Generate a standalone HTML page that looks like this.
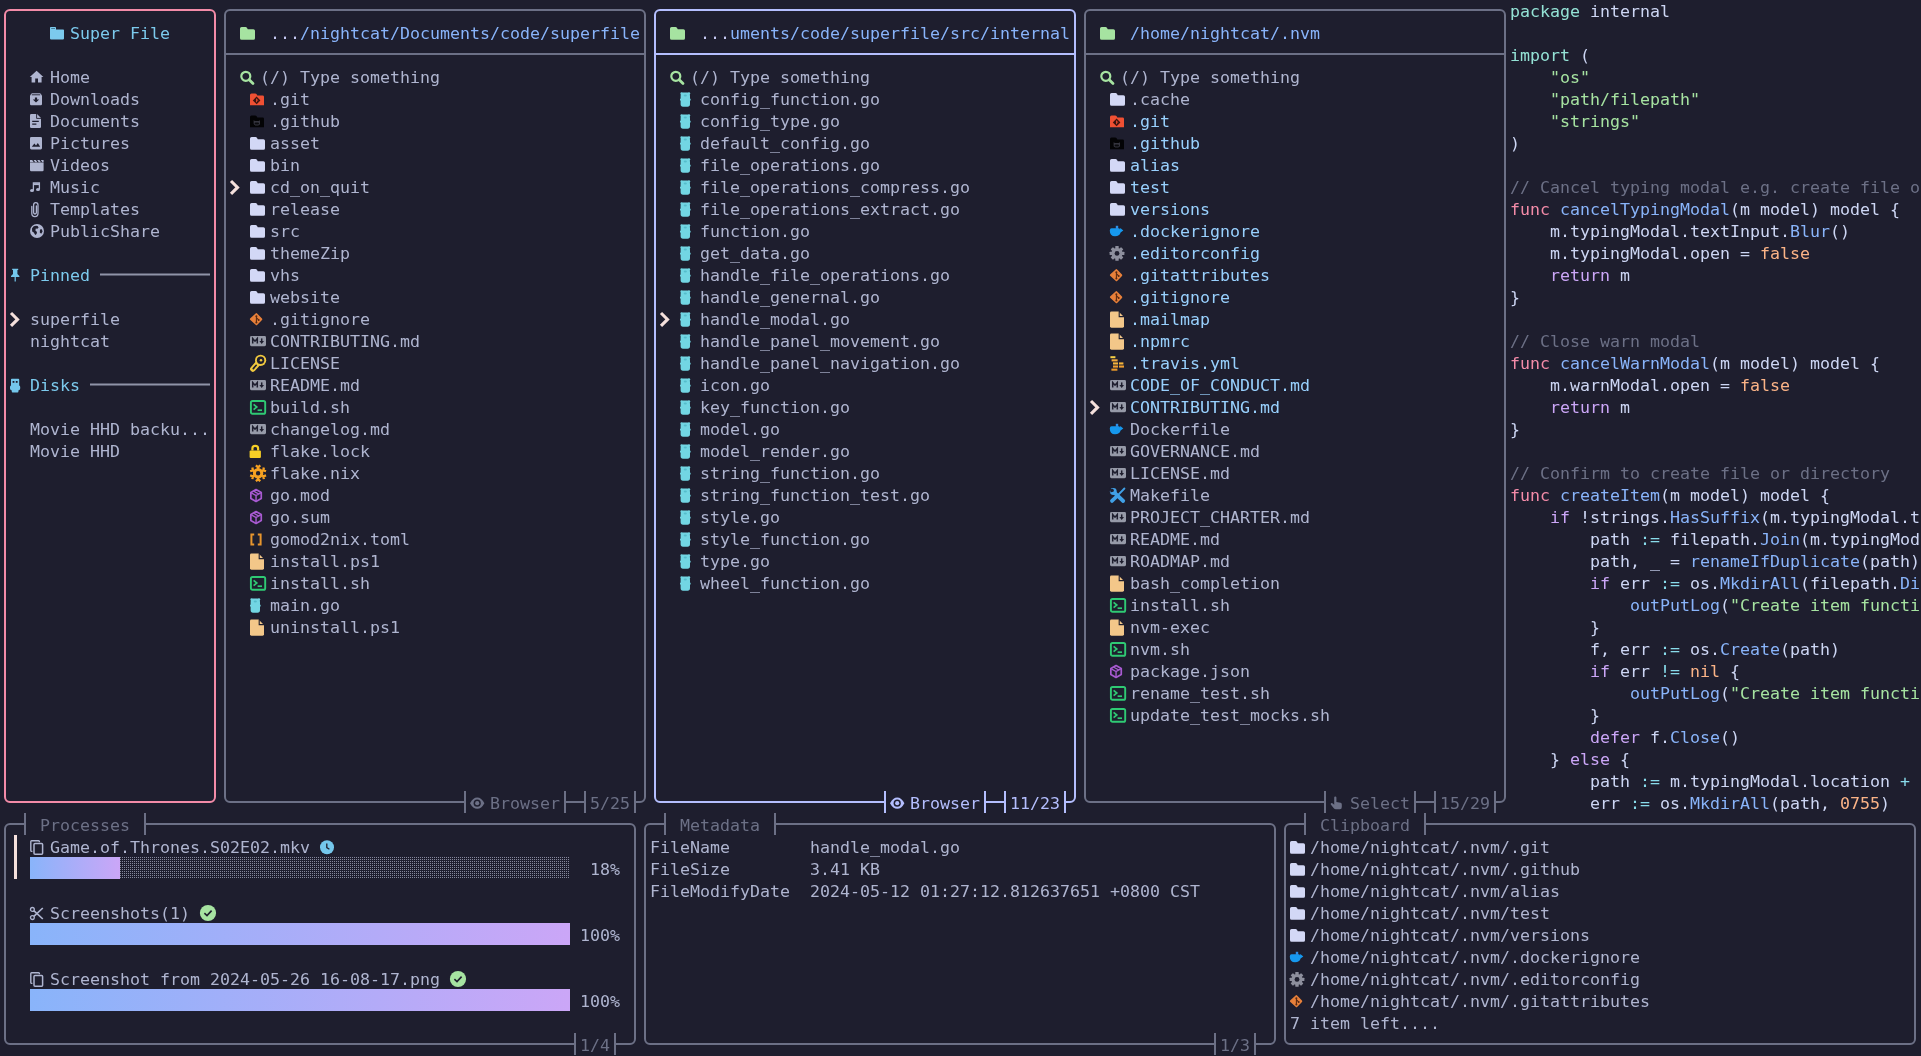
<!DOCTYPE html>
<html lang="en"><head><meta charset="utf-8"><title>superfile</title>
<style>
html,body{margin:0;padding:0}
body{width:1921px;height:1056px;background:#1e1e2e;overflow:hidden;position:relative;color:#afb5d0;
font-family:"DejaVu Sans Mono","Liberation Mono",monospace;font-size:16.61px;line-height:22px}
.t{position:absolute;white-space:pre;height:22px}
#s{position:absolute;left:0;top:0;width:1921px;height:1056px;will-change:transform}
.sky{color:#7ccaed}
.sel{color:#98d0fd}
.i{position:absolute;overflow:visible}
#b{position:absolute;left:0;top:0}
#b path{fill:none;stroke-width:2}
.bar{position:absolute;height:22px;background:linear-gradient(90deg,#89b4fa,#cba6f7)}
.dots{position:absolute;height:22px;background-size:2px 2px;background-image:linear-gradient(to bottom,transparent 1px,#1e1e2e 1px),linear-gradient(to right,#85879c 1px,transparent 1px)}
</style></head>
<body>
<svg id="b" width="1921" height="1056" viewBox="0 0 1921 1056">
<path d="M10,10 A5,5 0 0 0 5,15 V797 A5,5 0 0 0 10,802 M210,10 A5,5 0 0 1 215,15 V797 A5,5 0 0 1 210,802 M10,10 H210 M10,802 H210" stroke="#f38ba8"/>
<path d="M100,274.5 H210" stroke="#9094a8"/>
<path d="M90,384.5 H210" stroke="#9094a8"/>
<path d="M230,10 A5,5 0 0 0 225,15 V797 A5,5 0 0 0 230,802 M640,10 A5,5 0 0 1 645,15 V797 A5,5 0 0 1 640,802 M230,10 H640 M230,802 H465 M565,802 H585 M635,802 H640 M225,54 H645" stroke="#6c7086"/>
<path d="M465,791 V813 M565,791 V813 M585,791 V813 M635,791 V813" stroke="#6c7086"/>
<path d="M660,10 A5,5 0 0 0 655,15 V797 A5,5 0 0 0 660,802 M1070,10 A5,5 0 0 1 1075,15 V797 A5,5 0 0 1 1070,802 M660,10 H1070 M660,802 H885 M985,802 H1005 M1065,802 H1070 M655,54 H1075" stroke="#b4befe"/>
<path d="M885,791 V813 M985,791 V813 M1005,791 V813 M1065,791 V813" stroke="#b4befe"/>
<path d="M1090,10 A5,5 0 0 0 1085,15 V797 A5,5 0 0 0 1090,802 M1500,10 A5,5 0 0 1 1505,15 V797 A5,5 0 0 1 1500,802 M1090,10 H1500 M1090,802 H1325 M1415,802 H1435 M1495,802 H1500 M1085,54 H1505" stroke="#6c7086"/>
<path d="M1325,791 V813 M1415,791 V813 M1435,791 V813 M1495,791 V813" stroke="#6c7086"/>
<path d="M10,824 A5,5 0 0 0 5,829 V1039 A5,5 0 0 0 10,1044 M630,824 A5,5 0 0 1 635,829 V1039 A5,5 0 0 1 630,1044 M10,824 H25 M145,824 H630 M10,1044 H575 M615,1044 H630" stroke="#6c7086"/>
<path d="M25,813 V835 M145,813 V835" stroke="#6c7086"/>
<path d="M575,1033 V1055 M615,1033 V1055" stroke="#6c7086"/>
<path d="M650,824 A5,5 0 0 0 645,829 V1039 A5,5 0 0 0 650,1044 M1270,824 A5,5 0 0 1 1275,829 V1039 A5,5 0 0 1 1270,1044 M650,824 H665 M775,824 H1270 M650,1044 H1215 M1255,1044 H1270" stroke="#6c7086"/>
<path d="M665,813 V835 M775,813 V835" stroke="#6c7086"/>
<path d="M1215,1033 V1055 M1255,1033 V1055" stroke="#6c7086"/>
<path d="M1290,824 A5,5 0 0 0 1285,829 V1039 A5,5 0 0 0 1290,1044 M1910,824 A5,5 0 0 1 1915,829 V1039 A5,5 0 0 1 1910,1044 M1290,824 H1305 M1425,824 H1910 M1290,1044 H1910" stroke="#6c7086"/>
<path d="M1305,813 V835 M1425,813 V835" stroke="#6c7086"/>
</svg>
<div id="s">
<svg class="i" style="left:50px;top:22px" width="22" height="22" viewBox="0 0 22 22"><path d="M0.8,5 H5.2 Q6,5 6,5.8 V7.4 H13.2 Q14,7.4 14,8.2 V16.6 Q14,17.4 13.2,17.4 H0.8 Q0,17.4 0,16.6 V5.8 Q0,5 0.8,5 Z" fill="#7ccaed"/><path d="M1.2,6.5 H5" stroke="#3f7590" stroke-width="0.9"/></svg>
<div class="t sky" style="left:70px;top:23px">Super File</div>
<svg class="i" style="left:30px;top:66px" width="22" height="22" viewBox="0 0 22 22"><path d="M6.6,4.8 L13.4,11 H11.6 V16.4 H8 V12.6 H5.2 V16.4 H1.6 V11 H-0.2 Z" fill="#afb5d0"/></svg>
<div class="t" style="left:50px;top:67px">Home</div>
<svg class="i" style="left:30px;top:88px" width="22" height="22" viewBox="0 0 22 22"><path d="M1.8,5.2 H10.2 L12,7.6 V16 Q12,17.2 10.8,17.2 H1.2 Q0,17.2 0,16 V7.6 Z" fill="#afb5d0"/><path d="M1.8,6.8 H10.2" stroke="#1e1e2e" stroke-width="0.9"/><path d="M4.9,9.4 H7.1 V11.4 H9.2 L6,14.6 L2.8,11.4 H4.9 Z" fill="#1e1e2e"/></svg>
<div class="t" style="left:50px;top:89px">Downloads</div>
<svg class="i" style="left:30px;top:110px" width="22" height="22" viewBox="0 0 22 22"><path d="M1.2,4 H7 L11,8 V16.8 Q11,18 9.8,18 H1.2 Q0,18 0,16.8 V5.2 Q0,4 1.2,4 Z" fill="#afb5d0"/><path d="M6.6,4 V8.4 H11" fill="none" stroke="#1e1e2e" stroke-width="0.9"/><path d="M2.2,11.4 H8.8 M2.2,14.2 H6.4" stroke="#1e1e2e" stroke-width="1.3"/></svg>
<div class="t" style="left:50px;top:111px">Documents</div>
<svg class="i" style="left:30px;top:132px" width="22" height="22" viewBox="0 0 22 22"><rect x="0" y="5" width="12" height="12.4" rx="1.3" fill="#afb5d0"/><path d="M1.8,14.8 L4.4,11.4 L6,13.4 L7.8,11 L10.2,14.8 Z" fill="#1e1e2e"/></svg>
<div class="t" style="left:50px;top:133px">Pictures</div>
<svg class="i" style="left:30px;top:154px" width="22" height="22" viewBox="0 0 22 22"><path d="M0,8.6 H13.6 V16 Q13.6,17.2 12.4,17.2 H1.2 Q0,17.2 0,16 Z" fill="#afb5d0"/><path d="M0,6 H2.2 L3.8,8.2 H0 Z M3.6,6 H5.8 L7.4,8.2 H5.2 Z M7.2,6 H9.4 L11,8.2 H8.8 Z M10.8,6 H13.6 V8.2 H12.4 Z" fill="#afb5d0"/></svg>
<div class="t" style="left:50px;top:155px">Videos</div>
<svg class="i" style="left:30px;top:176px" width="22" height="22" viewBox="0 0 22 22"><path d="M3.4,14.4 V7 H9.4 V13.2" fill="none" stroke="#afb5d0" stroke-width="1.3"/><path d="M3.4,8.2 H9.4" stroke="#afb5d0" stroke-width="1.8"/><ellipse cx="2" cy="14.6" rx="2" ry="1.5" fill="#afb5d0"/><ellipse cx="8" cy="13.6" rx="2" ry="1.5" fill="#afb5d0"/></svg>
<div class="t" style="left:50px;top:177px">Music</div>
<svg class="i" style="left:30px;top:198px" width="22" height="22" viewBox="0 0 22 22"><path d="M6.4,8 V14.6 Q6.4,16 5,16 Q3.6,16 3.6,14.6 V7 Q3.6,4.6 5.8,4.6 Q8,4.6 8,7 V15.2 Q8,18.6 4.9,18.6 Q1.8,18.6 1.8,15.2 V8.4" fill="none" stroke="#afb5d0" stroke-width="1.3" stroke-linecap="round"/></svg>
<div class="t" style="left:50px;top:199px">Templates</div>
<svg class="i" style="left:30px;top:220px" width="22" height="22" viewBox="0 0 22 22"><circle cx="7" cy="11" r="7" fill="#afb5d0"/><path d="M3.4,6.4 Q5.6,5.4 7.6,6 L8.6,7.4 L7.4,8.8 L5.8,8.6 L5.4,10.6 L7,12 L6.6,14 L5.2,15 L3.8,12.6 L2.2,11.4 L2,8.6 Z M10,9.6 L11.8,9.2 L12.6,11.4 L11.2,13.8 L9.8,12.6 Z" fill="#1e1e2e"/></svg>
<div class="t" style="left:50px;top:221px">PublicShare</div>
<svg class="i" style="left:10px;top:264px" width="22" height="22" viewBox="0 0 22 22"><path d="M2.2,4.8 H8.2 V6 H7.4 V10 L9.4,12 V13 H5.8 V17.6 H4.6 V13 H1 V12 L3,10 V6 H2.2 Z" fill="#74c7ec"/></svg>
<div class="t sky" style="left:30px;top:265px">Pinned</div>
<svg class="i" style="left:10px;top:308px" width="22" height="22" viewBox="0 0 22 22"><path d="M1,5 L7.5,11.4 L1,17.8" fill="none" stroke="#f5e0dc" stroke-width="3.1" stroke-linejoin="miter"/></svg>
<div class="t" style="left:30px;top:309px">superfile</div>
<div class="t" style="left:30px;top:331px">nightcat</div>
<svg class="i" style="left:10px;top:374px" width="22" height="22" viewBox="0 0 22 22"><path d="M1,5.6 Q1,4.8 1.8,4.8 H8.4 Q9.2,4.8 9.2,5.6 V11.4 Q10.2,11.8 10.2,13 V14.4 Q10.2,16 8.4,16.6 V17.8 Q8.4,18.6 7.6,18.6 H2.6 Q1.8,18.6 1.8,17.8 V16.6 Q0,16 0,14.4 V13 Q0,11.8 1,11.4 Z" fill="#74c7ec"/><rect x="2.6" y="7" width="1.8" height="1.8" fill="#1e1e2e"/><rect x="5.8" y="7" width="1.8" height="1.8" fill="#1e1e2e"/></svg>
<div class="t sky" style="left:30px;top:375px">Disks</div>
<div class="t" style="left:30px;top:419px">Movie HHD backu...</div>
<div class="t" style="left:30px;top:441px">Movie HHD</div>
<svg class="i" style="left:240px;top:22px" width="22" height="22" viewBox="0 0 22 22"><path d="M1.6,5 H5.6 Q6.4,5 6.9,5.7 L7.8,7.2 H13.4 Q15,7.2 15,8.8 V16.2 Q15,17.8 13.4,17.8 H1.6 Q0,17.8 0,16.2 V6.6 Q0,5 1.6,5 Z" fill="#a6e3a1"/></svg>
<div class="t" style="left:270px;top:23px"><span style="color:#c6c9f3">...</span><span style="color:#89b4fa">/nightcat/Documents/code/superfile</span></div>
<svg class="i" style="left:240px;top:66px" width="22" height="22" viewBox="0 0 22 22"><circle cx="5.8" cy="10.3" r="4.5" fill="none" stroke="#a6e3a1" stroke-width="2.2"/><path d="M9.2,13.8 L13,17.6" stroke="#a6e3a1" stroke-width="2.8" stroke-linecap="round"/></svg>
<div class="t" style="left:260px;top:67px">(/) Type something</div>
<svg class="i" style="left:250px;top:88px" width="22" height="22" viewBox="0 0 22 22"><path d="M1.5,5.4 H5.2 Q6,5.4 6.5,6.1 L7.3,7.4 H12.6 Q14,7.4 14,8.8 V17.3 H0 V6.9 Q0,5.4 1.5,5.4 Z" fill="#f05033"/><path d="M6.6,8.6 L10.4,12.4 L6.6,16.2 L2.8,12.4 Z" fill="#3b1410"/><path d="M6.6,10.6 V14.2 M6.6,11.4 L8.2,12.6" stroke="#f05033" stroke-width="0.9" fill="none"/></svg>
<div class="t" style="left:270px;top:89px">.git</div>
<svg class="i" style="left:250px;top:110px" width="22" height="22" viewBox="0 0 22 22"><path d="M1.5,5.4 H5.2 Q6,5.4 6.5,6.1 L7.3,7.4 H12.6 Q14,7.4 14,8.8 V17.3 H0 V6.9 Q0,5.4 1.5,5.4 Z" fill="#030305"/><path d="M3.6,10.2 L5,11 H8.6 L10,10.2 V13.6 Q10,15.6 6.8,15.6 Q3.6,15.6 3.6,13.6 Z" fill="#34343e"/><rect x="4.6" y="12.4" width="4.4" height="2.2" rx="1.1" fill="#0a0a0e"/></svg>
<div class="t" style="left:270px;top:111px">.github</div>
<svg class="i" style="left:250px;top:132px" width="22" height="22" viewBox="0 0 22 22"><path d="M1.6,5 H5.6 Q6.4,5 6.9,5.7 L7.8,7.2 H13.4 Q15,7.2 15,8.8 V16.2 Q15,17.8 13.4,17.8 H1.6 Q0,17.8 0,16.2 V6.6 Q0,5 1.6,5 Z" fill="#d3d8f6"/></svg>
<div class="t" style="left:270px;top:133px">asset</div>
<svg class="i" style="left:250px;top:154px" width="22" height="22" viewBox="0 0 22 22"><path d="M1.6,5 H5.6 Q6.4,5 6.9,5.7 L7.8,7.2 H13.4 Q15,7.2 15,8.8 V16.2 Q15,17.8 13.4,17.8 H1.6 Q0,17.8 0,16.2 V6.6 Q0,5 1.6,5 Z" fill="#d3d8f6"/></svg>
<div class="t" style="left:270px;top:155px">bin</div>
<svg class="i" style="left:230px;top:176px" width="22" height="22" viewBox="0 0 22 22"><path d="M1,5 L7.5,11.4 L1,17.8" fill="none" stroke="#f5e0dc" stroke-width="3.1" stroke-linejoin="miter"/></svg>
<svg class="i" style="left:250px;top:176px" width="22" height="22" viewBox="0 0 22 22"><path d="M1.6,5 H5.6 Q6.4,5 6.9,5.7 L7.8,7.2 H13.4 Q15,7.2 15,8.8 V16.2 Q15,17.8 13.4,17.8 H1.6 Q0,17.8 0,16.2 V6.6 Q0,5 1.6,5 Z" fill="#d3d8f6"/></svg>
<div class="t" style="left:270px;top:177px">cd_on_quit</div>
<svg class="i" style="left:250px;top:198px" width="22" height="22" viewBox="0 0 22 22"><path d="M1.6,5 H5.6 Q6.4,5 6.9,5.7 L7.8,7.2 H13.4 Q15,7.2 15,8.8 V16.2 Q15,17.8 13.4,17.8 H1.6 Q0,17.8 0,16.2 V6.6 Q0,5 1.6,5 Z" fill="#d3d8f6"/></svg>
<div class="t" style="left:270px;top:199px">release</div>
<svg class="i" style="left:250px;top:220px" width="22" height="22" viewBox="0 0 22 22"><path d="M1.6,5 H5.6 Q6.4,5 6.9,5.7 L7.8,7.2 H13.4 Q15,7.2 15,8.8 V16.2 Q15,17.8 13.4,17.8 H1.6 Q0,17.8 0,16.2 V6.6 Q0,5 1.6,5 Z" fill="#d3d8f6"/></svg>
<div class="t" style="left:270px;top:221px">src</div>
<svg class="i" style="left:250px;top:242px" width="22" height="22" viewBox="0 0 22 22"><path d="M1.6,5 H5.6 Q6.4,5 6.9,5.7 L7.8,7.2 H13.4 Q15,7.2 15,8.8 V16.2 Q15,17.8 13.4,17.8 H1.6 Q0,17.8 0,16.2 V6.6 Q0,5 1.6,5 Z" fill="#d3d8f6"/></svg>
<div class="t" style="left:270px;top:243px">themeZip</div>
<svg class="i" style="left:250px;top:264px" width="22" height="22" viewBox="0 0 22 22"><path d="M1.6,5 H5.6 Q6.4,5 6.9,5.7 L7.8,7.2 H13.4 Q15,7.2 15,8.8 V16.2 Q15,17.8 13.4,17.8 H1.6 Q0,17.8 0,16.2 V6.6 Q0,5 1.6,5 Z" fill="#d3d8f6"/></svg>
<div class="t" style="left:270px;top:265px">vhs</div>
<svg class="i" style="left:250px;top:286px" width="22" height="22" viewBox="0 0 22 22"><path d="M1.6,5 H5.6 Q6.4,5 6.9,5.7 L7.8,7.2 H13.4 Q15,7.2 15,8.8 V16.2 Q15,17.8 13.4,17.8 H1.6 Q0,17.8 0,16.2 V6.6 Q0,5 1.6,5 Z" fill="#d3d8f6"/></svg>
<div class="t" style="left:270px;top:287px">website</div>
<svg class="i" style="left:250px;top:308px" width="22" height="22" viewBox="0 0 22 22"><path d="M5.9,5.2 Q6.5,4.9 7.1,5.5 L12,10.4 Q12.6,11.2 12,12 L7.1,16.9 Q6.5,17.5 5.9,16.9 L0.1,11.8 Q-0.4,11.2 0.1,10.6 Z" fill="#e8803a"/><path d="M6.4,8 V14.8 M6.4,9.6 L8.6,11.8" stroke="#5a2a12" stroke-width="1.1" fill="none"/><circle cx="6.4" cy="8.2" r="1" fill="#5a2a12"/><circle cx="6.4" cy="14.6" r="1" fill="#5a2a12"/><circle cx="8.7" cy="11.9" r="1" fill="#5a2a12"/></svg>
<div class="t" style="left:270px;top:309px">.gitignore</div>
<svg class="i" style="left:250px;top:330px" width="22" height="22" viewBox="0 0 22 22"><rect x="0" y="6" width="16" height="10.2" rx="1.4" fill="#969aa8"/><path d="M2.7,13.6 V8.6 L5,11.2 L7.3,8.6 V13.6" stroke="#1e1e2e" stroke-width="1.5" fill="none" stroke-linejoin="miter"/><path d="M11.7,8.4 V12" stroke="#1e1e2e" stroke-width="1.5"/><path d="M9.4,11 H14 L11.7,13.9 Z" fill="#1e1e2e"/></svg>
<div class="t" style="left:270px;top:331px">CONTRIBUTING.md</div>
<svg class="i" style="left:250px;top:352px" width="22" height="22" viewBox="0 0 22 22"><path d="M10.6,8.3 L2.9,17" stroke="#f1c93f" stroke-width="5.6" stroke-linecap="round"/><circle cx="10.6" cy="8.3" r="5.6" fill="#f1c93f"/><circle cx="10.6" cy="8.3" r="3.7" fill="#1e1e2e"/><path d="M6.2,13.3 L3.3,16.6" stroke="#1e1e2e" stroke-width="1.7" stroke-linecap="round"/><circle cx="11" cy="8.2" r="1.25" fill="#f1c93f"/></svg>
<div class="t" style="left:270px;top:353px">LICENSE</div>
<svg class="i" style="left:250px;top:374px" width="22" height="22" viewBox="0 0 22 22"><rect x="0" y="6" width="16" height="10.2" rx="1.4" fill="#969aa8"/><path d="M2.7,13.6 V8.6 L5,11.2 L7.3,8.6 V13.6" stroke="#1e1e2e" stroke-width="1.5" fill="none" stroke-linejoin="miter"/><path d="M11.7,8.4 V12" stroke="#1e1e2e" stroke-width="1.5"/><path d="M9.4,11 H14 L11.7,13.9 Z" fill="#1e1e2e"/></svg>
<div class="t" style="left:270px;top:375px">README.md</div>
<svg class="i" style="left:250px;top:396px" width="22" height="22" viewBox="0 0 22 22"><rect x="0.9" y="5" width="14.3" height="12.8" rx="1.6" fill="none" stroke="#2fca74" stroke-width="1.9"/><path d="M3.6,8.3 L6.8,11 L3.6,13.7" fill="none" stroke="#2fca74" stroke-width="1.7"/><path d="M7.6,14.2 H12" stroke="#2fca74" stroke-width="1.7"/></svg>
<div class="t" style="left:270px;top:397px">build.sh</div>
<svg class="i" style="left:250px;top:418px" width="22" height="22" viewBox="0 0 22 22"><rect x="0" y="6" width="16" height="10.2" rx="1.4" fill="#969aa8"/><path d="M2.7,13.6 V8.6 L5,11.2 L7.3,8.6 V13.6" stroke="#1e1e2e" stroke-width="1.5" fill="none" stroke-linejoin="miter"/><path d="M11.7,8.4 V12" stroke="#1e1e2e" stroke-width="1.5"/><path d="M9.4,11 H14 L11.7,13.9 Z" fill="#1e1e2e"/></svg>
<div class="t" style="left:270px;top:419px">changelog.md</div>
<svg class="i" style="left:250px;top:440px" width="22" height="22" viewBox="0 0 22 22"><rect x="-0.4" y="10.4" width="11.3" height="7.7" rx="1" fill="#f6cf26"/><path d="M2.4,10.6 V8.4 Q2.4,5.9 5.25,5.9 Q8.1,5.9 8.1,8.4 V10.6" fill="none" stroke="#f6cf26" stroke-width="2.2"/></svg>
<div class="t" style="left:270px;top:441px">flake.lock</div>
<svg class="i" style="left:250px;top:462px" width="22" height="22" viewBox="0 0 22 22"><g transform="translate(8.1,11.3)"><g transform="rotate(0)"><path d="M0,-3.6 V-7.6 M0,-6 L-2.2,-7.9 M0,-6 L2.2,-7.9" stroke="#f5a122" stroke-width="2.3" fill="none"/></g><g transform="rotate(60)"><path d="M0,-3.6 V-7.6 M0,-6 L-2.2,-7.9 M0,-6 L2.2,-7.9" stroke="#f5a122" stroke-width="2.3" fill="none"/></g><g transform="rotate(120)"><path d="M0,-3.6 V-7.6 M0,-6 L-2.2,-7.9 M0,-6 L2.2,-7.9" stroke="#f5a122" stroke-width="2.3" fill="none"/></g><g transform="rotate(180)"><path d="M0,-3.6 V-7.6 M0,-6 L-2.2,-7.9 M0,-6 L2.2,-7.9" stroke="#f5a122" stroke-width="2.3" fill="none"/></g><g transform="rotate(240)"><path d="M0,-3.6 V-7.6 M0,-6 L-2.2,-7.9 M0,-6 L2.2,-7.9" stroke="#f5a122" stroke-width="2.3" fill="none"/></g><g transform="rotate(300)"><path d="M0,-3.6 V-7.6 M0,-6 L-2.2,-7.9 M0,-6 L2.2,-7.9" stroke="#f5a122" stroke-width="2.3" fill="none"/></g><circle r="3.7" fill="none" stroke="#f5a122" stroke-width="3"/></g></svg>
<div class="t" style="left:270px;top:463px">flake.nix</div>
<svg class="i" style="left:250px;top:484px" width="22" height="22" viewBox="0 0 22 22"><path d="M6.05,5.5 L11.25,8.5 V14.5 L6.05,17.5 L0.85,14.5 V8.5 Z" fill="none" stroke="#a85ad2" stroke-width="1.7" stroke-linejoin="round"/><path d="M0.9,8.6 L6.05,11.5 L11.2,8.6 M6.05,11.5 V17.4 M3.4,7 L8.7,10" fill="none" stroke="#a85ad2" stroke-width="1.4"/></svg>
<div class="t" style="left:270px;top:485px">go.mod</div>
<svg class="i" style="left:250px;top:506px" width="22" height="22" viewBox="0 0 22 22"><path d="M6.05,5.5 L11.25,8.5 V14.5 L6.05,17.5 L0.85,14.5 V8.5 Z" fill="none" stroke="#a85ad2" stroke-width="1.7" stroke-linejoin="round"/><path d="M0.9,8.6 L6.05,11.5 L11.2,8.6 M6.05,11.5 V17.4 M3.4,7 L8.7,10" fill="none" stroke="#a85ad2" stroke-width="1.4"/></svg>
<div class="t" style="left:270px;top:507px">go.sum</div>
<svg class="i" style="left:250px;top:528px" width="22" height="22" viewBox="0 0 22 22"><path d="M4.2,6.6 H1.4 V16.6 H4.2 M7.8,6.6 H10.6 V16.6 H7.8" fill="none" stroke="#e8962e" stroke-width="2"/></svg>
<div class="t" style="left:270px;top:529px">gomod2nix.toml</div>
<svg class="i" style="left:250px;top:550px" width="22" height="22" viewBox="0 0 22 22"><path d="M1.4,3.6 H8.6 L14,9 V18.3 Q14,19.7 12.6,19.7 H1.4 Q0,19.7 0,18.3 V5 Q0,3.6 1.4,3.6 Z" fill="#f3c789"/><path d="M9.2,3.6 V8.6 H14" fill="none" stroke="#1e1e2e" stroke-width="1.1"/></svg>
<div class="t" style="left:270px;top:551px">install.ps1</div>
<svg class="i" style="left:250px;top:572px" width="22" height="22" viewBox="0 0 22 22"><rect x="0.9" y="5" width="14.3" height="12.8" rx="1.6" fill="none" stroke="#2fca74" stroke-width="1.9"/><path d="M3.6,8.3 L6.8,11 L3.6,13.7" fill="none" stroke="#2fca74" stroke-width="1.7"/><path d="M7.6,14.2 H12" stroke="#2fca74" stroke-width="1.7"/></svg>
<div class="t" style="left:270px;top:573px">install.sh</div>
<svg class="i" style="left:250px;top:594px" width="22" height="22" viewBox="0 0 22 22"><path d="M0.6,8 Q0.6,4.2 3.4,4.4 H7.2 Q10,4.2 10,8 V16 Q10,18.8 7.6,18.8 H3 Q0.6,18.8 0.6,16 Z" fill="#72d6e3"/><circle cx="1.6" cy="5.4" r="1.2" fill="#72d6e3"/><circle cx="9" cy="5.4" r="1.2" fill="#72d6e3"/><ellipse cx="5.3" cy="7.4" rx="1.6" ry="1" fill="#55bccb"/><path d="M0,11.6 H1 M9.6,11.6 H10.6" stroke="#72d6e3" stroke-width="1.6"/></svg>
<div class="t" style="left:270px;top:595px">main.go</div>
<svg class="i" style="left:250px;top:616px" width="22" height="22" viewBox="0 0 22 22"><path d="M1.4,3.6 H8.6 L14,9 V18.3 Q14,19.7 12.6,19.7 H1.4 Q0,19.7 0,18.3 V5 Q0,3.6 1.4,3.6 Z" fill="#f3c789"/><path d="M9.2,3.6 V8.6 H14" fill="none" stroke="#1e1e2e" stroke-width="1.1"/></svg>
<div class="t" style="left:270px;top:617px">uninstall.ps1</div>
<svg class="i" style="left:470px;top:792px" width="22" height="22" viewBox="0 0 22 22"><path d="M0,11.2 Q3,5.6 7.2,5.6 Q11.4,5.6 14.4,11.2 Q11.4,16.8 7.2,16.8 Q3,16.8 0,11.2 Z" fill="#6c7086"/><circle cx="7.2" cy="11.2" r="3.6" fill="#1e1e2e"/><circle cx="7.2" cy="11.2" r="2.1" fill="#6c7086"/></svg>
<div class="t" style="left:490px;top:793px"><span style="color:#6c7086">Browser</span></div>
<div class="t" style="left:590px;top:793px"><span style="color:#6c7086">5/25</span></div>
<svg class="i" style="left:670px;top:22px" width="22" height="22" viewBox="0 0 22 22"><path d="M1.6,5 H5.6 Q6.4,5 6.9,5.7 L7.8,7.2 H13.4 Q15,7.2 15,8.8 V16.2 Q15,17.8 13.4,17.8 H1.6 Q0,17.8 0,16.2 V6.6 Q0,5 1.6,5 Z" fill="#a6e3a1"/></svg>
<div class="t" style="left:700px;top:23px"><span style="color:#c6c9f3">...</span><span style="color:#89b4fa">uments/code/superfile/src/internal</span></div>
<svg class="i" style="left:670px;top:66px" width="22" height="22" viewBox="0 0 22 22"><circle cx="5.8" cy="10.3" r="4.5" fill="none" stroke="#a6e3a1" stroke-width="2.2"/><path d="M9.2,13.8 L13,17.6" stroke="#a6e3a1" stroke-width="2.8" stroke-linecap="round"/></svg>
<div class="t" style="left:690px;top:67px">(/) Type something</div>
<svg class="i" style="left:680px;top:88px" width="22" height="22" viewBox="0 0 22 22"><path d="M0.6,8 Q0.6,4.2 3.4,4.4 H7.2 Q10,4.2 10,8 V16 Q10,18.8 7.6,18.8 H3 Q0.6,18.8 0.6,16 Z" fill="#72d6e3"/><circle cx="1.6" cy="5.4" r="1.2" fill="#72d6e3"/><circle cx="9" cy="5.4" r="1.2" fill="#72d6e3"/><ellipse cx="5.3" cy="7.4" rx="1.6" ry="1" fill="#55bccb"/><path d="M0,11.6 H1 M9.6,11.6 H10.6" stroke="#72d6e3" stroke-width="1.6"/></svg>
<div class="t" style="left:700px;top:89px">config_function.go</div>
<svg class="i" style="left:680px;top:110px" width="22" height="22" viewBox="0 0 22 22"><path d="M0.6,8 Q0.6,4.2 3.4,4.4 H7.2 Q10,4.2 10,8 V16 Q10,18.8 7.6,18.8 H3 Q0.6,18.8 0.6,16 Z" fill="#72d6e3"/><circle cx="1.6" cy="5.4" r="1.2" fill="#72d6e3"/><circle cx="9" cy="5.4" r="1.2" fill="#72d6e3"/><ellipse cx="5.3" cy="7.4" rx="1.6" ry="1" fill="#55bccb"/><path d="M0,11.6 H1 M9.6,11.6 H10.6" stroke="#72d6e3" stroke-width="1.6"/></svg>
<div class="t" style="left:700px;top:111px">config_type.go</div>
<svg class="i" style="left:680px;top:132px" width="22" height="22" viewBox="0 0 22 22"><path d="M0.6,8 Q0.6,4.2 3.4,4.4 H7.2 Q10,4.2 10,8 V16 Q10,18.8 7.6,18.8 H3 Q0.6,18.8 0.6,16 Z" fill="#72d6e3"/><circle cx="1.6" cy="5.4" r="1.2" fill="#72d6e3"/><circle cx="9" cy="5.4" r="1.2" fill="#72d6e3"/><ellipse cx="5.3" cy="7.4" rx="1.6" ry="1" fill="#55bccb"/><path d="M0,11.6 H1 M9.6,11.6 H10.6" stroke="#72d6e3" stroke-width="1.6"/></svg>
<div class="t" style="left:700px;top:133px">default_config.go</div>
<svg class="i" style="left:680px;top:154px" width="22" height="22" viewBox="0 0 22 22"><path d="M0.6,8 Q0.6,4.2 3.4,4.4 H7.2 Q10,4.2 10,8 V16 Q10,18.8 7.6,18.8 H3 Q0.6,18.8 0.6,16 Z" fill="#72d6e3"/><circle cx="1.6" cy="5.4" r="1.2" fill="#72d6e3"/><circle cx="9" cy="5.4" r="1.2" fill="#72d6e3"/><ellipse cx="5.3" cy="7.4" rx="1.6" ry="1" fill="#55bccb"/><path d="M0,11.6 H1 M9.6,11.6 H10.6" stroke="#72d6e3" stroke-width="1.6"/></svg>
<div class="t" style="left:700px;top:155px">file_operations.go</div>
<svg class="i" style="left:680px;top:176px" width="22" height="22" viewBox="0 0 22 22"><path d="M0.6,8 Q0.6,4.2 3.4,4.4 H7.2 Q10,4.2 10,8 V16 Q10,18.8 7.6,18.8 H3 Q0.6,18.8 0.6,16 Z" fill="#72d6e3"/><circle cx="1.6" cy="5.4" r="1.2" fill="#72d6e3"/><circle cx="9" cy="5.4" r="1.2" fill="#72d6e3"/><ellipse cx="5.3" cy="7.4" rx="1.6" ry="1" fill="#55bccb"/><path d="M0,11.6 H1 M9.6,11.6 H10.6" stroke="#72d6e3" stroke-width="1.6"/></svg>
<div class="t" style="left:700px;top:177px">file_operations_compress.go</div>
<svg class="i" style="left:680px;top:198px" width="22" height="22" viewBox="0 0 22 22"><path d="M0.6,8 Q0.6,4.2 3.4,4.4 H7.2 Q10,4.2 10,8 V16 Q10,18.8 7.6,18.8 H3 Q0.6,18.8 0.6,16 Z" fill="#72d6e3"/><circle cx="1.6" cy="5.4" r="1.2" fill="#72d6e3"/><circle cx="9" cy="5.4" r="1.2" fill="#72d6e3"/><ellipse cx="5.3" cy="7.4" rx="1.6" ry="1" fill="#55bccb"/><path d="M0,11.6 H1 M9.6,11.6 H10.6" stroke="#72d6e3" stroke-width="1.6"/></svg>
<div class="t" style="left:700px;top:199px">file_operations_extract.go</div>
<svg class="i" style="left:680px;top:220px" width="22" height="22" viewBox="0 0 22 22"><path d="M0.6,8 Q0.6,4.2 3.4,4.4 H7.2 Q10,4.2 10,8 V16 Q10,18.8 7.6,18.8 H3 Q0.6,18.8 0.6,16 Z" fill="#72d6e3"/><circle cx="1.6" cy="5.4" r="1.2" fill="#72d6e3"/><circle cx="9" cy="5.4" r="1.2" fill="#72d6e3"/><ellipse cx="5.3" cy="7.4" rx="1.6" ry="1" fill="#55bccb"/><path d="M0,11.6 H1 M9.6,11.6 H10.6" stroke="#72d6e3" stroke-width="1.6"/></svg>
<div class="t" style="left:700px;top:221px">function.go</div>
<svg class="i" style="left:680px;top:242px" width="22" height="22" viewBox="0 0 22 22"><path d="M0.6,8 Q0.6,4.2 3.4,4.4 H7.2 Q10,4.2 10,8 V16 Q10,18.8 7.6,18.8 H3 Q0.6,18.8 0.6,16 Z" fill="#72d6e3"/><circle cx="1.6" cy="5.4" r="1.2" fill="#72d6e3"/><circle cx="9" cy="5.4" r="1.2" fill="#72d6e3"/><ellipse cx="5.3" cy="7.4" rx="1.6" ry="1" fill="#55bccb"/><path d="M0,11.6 H1 M9.6,11.6 H10.6" stroke="#72d6e3" stroke-width="1.6"/></svg>
<div class="t" style="left:700px;top:243px">get_data.go</div>
<svg class="i" style="left:680px;top:264px" width="22" height="22" viewBox="0 0 22 22"><path d="M0.6,8 Q0.6,4.2 3.4,4.4 H7.2 Q10,4.2 10,8 V16 Q10,18.8 7.6,18.8 H3 Q0.6,18.8 0.6,16 Z" fill="#72d6e3"/><circle cx="1.6" cy="5.4" r="1.2" fill="#72d6e3"/><circle cx="9" cy="5.4" r="1.2" fill="#72d6e3"/><ellipse cx="5.3" cy="7.4" rx="1.6" ry="1" fill="#55bccb"/><path d="M0,11.6 H1 M9.6,11.6 H10.6" stroke="#72d6e3" stroke-width="1.6"/></svg>
<div class="t" style="left:700px;top:265px">handle_file_operations.go</div>
<svg class="i" style="left:680px;top:286px" width="22" height="22" viewBox="0 0 22 22"><path d="M0.6,8 Q0.6,4.2 3.4,4.4 H7.2 Q10,4.2 10,8 V16 Q10,18.8 7.6,18.8 H3 Q0.6,18.8 0.6,16 Z" fill="#72d6e3"/><circle cx="1.6" cy="5.4" r="1.2" fill="#72d6e3"/><circle cx="9" cy="5.4" r="1.2" fill="#72d6e3"/><ellipse cx="5.3" cy="7.4" rx="1.6" ry="1" fill="#55bccb"/><path d="M0,11.6 H1 M9.6,11.6 H10.6" stroke="#72d6e3" stroke-width="1.6"/></svg>
<div class="t" style="left:700px;top:287px">handle_genernal.go</div>
<svg class="i" style="left:660px;top:308px" width="22" height="22" viewBox="0 0 22 22"><path d="M1,5 L7.5,11.4 L1,17.8" fill="none" stroke="#f5e0dc" stroke-width="3.1" stroke-linejoin="miter"/></svg>
<svg class="i" style="left:680px;top:308px" width="22" height="22" viewBox="0 0 22 22"><path d="M0.6,8 Q0.6,4.2 3.4,4.4 H7.2 Q10,4.2 10,8 V16 Q10,18.8 7.6,18.8 H3 Q0.6,18.8 0.6,16 Z" fill="#72d6e3"/><circle cx="1.6" cy="5.4" r="1.2" fill="#72d6e3"/><circle cx="9" cy="5.4" r="1.2" fill="#72d6e3"/><ellipse cx="5.3" cy="7.4" rx="1.6" ry="1" fill="#55bccb"/><path d="M0,11.6 H1 M9.6,11.6 H10.6" stroke="#72d6e3" stroke-width="1.6"/></svg>
<div class="t" style="left:700px;top:309px">handle_modal.go</div>
<svg class="i" style="left:680px;top:330px" width="22" height="22" viewBox="0 0 22 22"><path d="M0.6,8 Q0.6,4.2 3.4,4.4 H7.2 Q10,4.2 10,8 V16 Q10,18.8 7.6,18.8 H3 Q0.6,18.8 0.6,16 Z" fill="#72d6e3"/><circle cx="1.6" cy="5.4" r="1.2" fill="#72d6e3"/><circle cx="9" cy="5.4" r="1.2" fill="#72d6e3"/><ellipse cx="5.3" cy="7.4" rx="1.6" ry="1" fill="#55bccb"/><path d="M0,11.6 H1 M9.6,11.6 H10.6" stroke="#72d6e3" stroke-width="1.6"/></svg>
<div class="t" style="left:700px;top:331px">handle_panel_movement.go</div>
<svg class="i" style="left:680px;top:352px" width="22" height="22" viewBox="0 0 22 22"><path d="M0.6,8 Q0.6,4.2 3.4,4.4 H7.2 Q10,4.2 10,8 V16 Q10,18.8 7.6,18.8 H3 Q0.6,18.8 0.6,16 Z" fill="#72d6e3"/><circle cx="1.6" cy="5.4" r="1.2" fill="#72d6e3"/><circle cx="9" cy="5.4" r="1.2" fill="#72d6e3"/><ellipse cx="5.3" cy="7.4" rx="1.6" ry="1" fill="#55bccb"/><path d="M0,11.6 H1 M9.6,11.6 H10.6" stroke="#72d6e3" stroke-width="1.6"/></svg>
<div class="t" style="left:700px;top:353px">handle_panel_navigation.go</div>
<svg class="i" style="left:680px;top:374px" width="22" height="22" viewBox="0 0 22 22"><path d="M0.6,8 Q0.6,4.2 3.4,4.4 H7.2 Q10,4.2 10,8 V16 Q10,18.8 7.6,18.8 H3 Q0.6,18.8 0.6,16 Z" fill="#72d6e3"/><circle cx="1.6" cy="5.4" r="1.2" fill="#72d6e3"/><circle cx="9" cy="5.4" r="1.2" fill="#72d6e3"/><ellipse cx="5.3" cy="7.4" rx="1.6" ry="1" fill="#55bccb"/><path d="M0,11.6 H1 M9.6,11.6 H10.6" stroke="#72d6e3" stroke-width="1.6"/></svg>
<div class="t" style="left:700px;top:375px">icon.go</div>
<svg class="i" style="left:680px;top:396px" width="22" height="22" viewBox="0 0 22 22"><path d="M0.6,8 Q0.6,4.2 3.4,4.4 H7.2 Q10,4.2 10,8 V16 Q10,18.8 7.6,18.8 H3 Q0.6,18.8 0.6,16 Z" fill="#72d6e3"/><circle cx="1.6" cy="5.4" r="1.2" fill="#72d6e3"/><circle cx="9" cy="5.4" r="1.2" fill="#72d6e3"/><ellipse cx="5.3" cy="7.4" rx="1.6" ry="1" fill="#55bccb"/><path d="M0,11.6 H1 M9.6,11.6 H10.6" stroke="#72d6e3" stroke-width="1.6"/></svg>
<div class="t" style="left:700px;top:397px">key_function.go</div>
<svg class="i" style="left:680px;top:418px" width="22" height="22" viewBox="0 0 22 22"><path d="M0.6,8 Q0.6,4.2 3.4,4.4 H7.2 Q10,4.2 10,8 V16 Q10,18.8 7.6,18.8 H3 Q0.6,18.8 0.6,16 Z" fill="#72d6e3"/><circle cx="1.6" cy="5.4" r="1.2" fill="#72d6e3"/><circle cx="9" cy="5.4" r="1.2" fill="#72d6e3"/><ellipse cx="5.3" cy="7.4" rx="1.6" ry="1" fill="#55bccb"/><path d="M0,11.6 H1 M9.6,11.6 H10.6" stroke="#72d6e3" stroke-width="1.6"/></svg>
<div class="t" style="left:700px;top:419px">model.go</div>
<svg class="i" style="left:680px;top:440px" width="22" height="22" viewBox="0 0 22 22"><path d="M0.6,8 Q0.6,4.2 3.4,4.4 H7.2 Q10,4.2 10,8 V16 Q10,18.8 7.6,18.8 H3 Q0.6,18.8 0.6,16 Z" fill="#72d6e3"/><circle cx="1.6" cy="5.4" r="1.2" fill="#72d6e3"/><circle cx="9" cy="5.4" r="1.2" fill="#72d6e3"/><ellipse cx="5.3" cy="7.4" rx="1.6" ry="1" fill="#55bccb"/><path d="M0,11.6 H1 M9.6,11.6 H10.6" stroke="#72d6e3" stroke-width="1.6"/></svg>
<div class="t" style="left:700px;top:441px">model_render.go</div>
<svg class="i" style="left:680px;top:462px" width="22" height="22" viewBox="0 0 22 22"><path d="M0.6,8 Q0.6,4.2 3.4,4.4 H7.2 Q10,4.2 10,8 V16 Q10,18.8 7.6,18.8 H3 Q0.6,18.8 0.6,16 Z" fill="#72d6e3"/><circle cx="1.6" cy="5.4" r="1.2" fill="#72d6e3"/><circle cx="9" cy="5.4" r="1.2" fill="#72d6e3"/><ellipse cx="5.3" cy="7.4" rx="1.6" ry="1" fill="#55bccb"/><path d="M0,11.6 H1 M9.6,11.6 H10.6" stroke="#72d6e3" stroke-width="1.6"/></svg>
<div class="t" style="left:700px;top:463px">string_function.go</div>
<svg class="i" style="left:680px;top:484px" width="22" height="22" viewBox="0 0 22 22"><path d="M0.6,8 Q0.6,4.2 3.4,4.4 H7.2 Q10,4.2 10,8 V16 Q10,18.8 7.6,18.8 H3 Q0.6,18.8 0.6,16 Z" fill="#72d6e3"/><circle cx="1.6" cy="5.4" r="1.2" fill="#72d6e3"/><circle cx="9" cy="5.4" r="1.2" fill="#72d6e3"/><ellipse cx="5.3" cy="7.4" rx="1.6" ry="1" fill="#55bccb"/><path d="M0,11.6 H1 M9.6,11.6 H10.6" stroke="#72d6e3" stroke-width="1.6"/></svg>
<div class="t" style="left:700px;top:485px">string_function_test.go</div>
<svg class="i" style="left:680px;top:506px" width="22" height="22" viewBox="0 0 22 22"><path d="M0.6,8 Q0.6,4.2 3.4,4.4 H7.2 Q10,4.2 10,8 V16 Q10,18.8 7.6,18.8 H3 Q0.6,18.8 0.6,16 Z" fill="#72d6e3"/><circle cx="1.6" cy="5.4" r="1.2" fill="#72d6e3"/><circle cx="9" cy="5.4" r="1.2" fill="#72d6e3"/><ellipse cx="5.3" cy="7.4" rx="1.6" ry="1" fill="#55bccb"/><path d="M0,11.6 H1 M9.6,11.6 H10.6" stroke="#72d6e3" stroke-width="1.6"/></svg>
<div class="t" style="left:700px;top:507px">style.go</div>
<svg class="i" style="left:680px;top:528px" width="22" height="22" viewBox="0 0 22 22"><path d="M0.6,8 Q0.6,4.2 3.4,4.4 H7.2 Q10,4.2 10,8 V16 Q10,18.8 7.6,18.8 H3 Q0.6,18.8 0.6,16 Z" fill="#72d6e3"/><circle cx="1.6" cy="5.4" r="1.2" fill="#72d6e3"/><circle cx="9" cy="5.4" r="1.2" fill="#72d6e3"/><ellipse cx="5.3" cy="7.4" rx="1.6" ry="1" fill="#55bccb"/><path d="M0,11.6 H1 M9.6,11.6 H10.6" stroke="#72d6e3" stroke-width="1.6"/></svg>
<div class="t" style="left:700px;top:529px">style_function.go</div>
<svg class="i" style="left:680px;top:550px" width="22" height="22" viewBox="0 0 22 22"><path d="M0.6,8 Q0.6,4.2 3.4,4.4 H7.2 Q10,4.2 10,8 V16 Q10,18.8 7.6,18.8 H3 Q0.6,18.8 0.6,16 Z" fill="#72d6e3"/><circle cx="1.6" cy="5.4" r="1.2" fill="#72d6e3"/><circle cx="9" cy="5.4" r="1.2" fill="#72d6e3"/><ellipse cx="5.3" cy="7.4" rx="1.6" ry="1" fill="#55bccb"/><path d="M0,11.6 H1 M9.6,11.6 H10.6" stroke="#72d6e3" stroke-width="1.6"/></svg>
<div class="t" style="left:700px;top:551px">type.go</div>
<svg class="i" style="left:680px;top:572px" width="22" height="22" viewBox="0 0 22 22"><path d="M0.6,8 Q0.6,4.2 3.4,4.4 H7.2 Q10,4.2 10,8 V16 Q10,18.8 7.6,18.8 H3 Q0.6,18.8 0.6,16 Z" fill="#72d6e3"/><circle cx="1.6" cy="5.4" r="1.2" fill="#72d6e3"/><circle cx="9" cy="5.4" r="1.2" fill="#72d6e3"/><ellipse cx="5.3" cy="7.4" rx="1.6" ry="1" fill="#55bccb"/><path d="M0,11.6 H1 M9.6,11.6 H10.6" stroke="#72d6e3" stroke-width="1.6"/></svg>
<div class="t" style="left:700px;top:573px">wheel_function.go</div>
<svg class="i" style="left:890px;top:792px" width="22" height="22" viewBox="0 0 22 22"><path d="M0,11.2 Q3,5.6 7.2,5.6 Q11.4,5.6 14.4,11.2 Q11.4,16.8 7.2,16.8 Q3,16.8 0,11.2 Z" fill="#b4befe"/><circle cx="7.2" cy="11.2" r="3.6" fill="#1e1e2e"/><circle cx="7.2" cy="11.2" r="2.1" fill="#b4befe"/></svg>
<div class="t" style="left:910px;top:793px"><span style="color:#b4befe">Browser</span></div>
<div class="t" style="left:1010px;top:793px"><span style="color:#b4befe">11/23</span></div>
<svg class="i" style="left:1100px;top:22px" width="22" height="22" viewBox="0 0 22 22"><path d="M1.6,5 H5.6 Q6.4,5 6.9,5.7 L7.8,7.2 H13.4 Q15,7.2 15,8.8 V16.2 Q15,17.8 13.4,17.8 H1.6 Q0,17.8 0,16.2 V6.6 Q0,5 1.6,5 Z" fill="#a6e3a1"/></svg>
<div class="t" style="left:1130px;top:23px"><span style="color:#89b4fa">/home/nightcat/.nvm</span></div>
<svg class="i" style="left:1100px;top:66px" width="22" height="22" viewBox="0 0 22 22"><circle cx="5.8" cy="10.3" r="4.5" fill="none" stroke="#a6e3a1" stroke-width="2.2"/><path d="M9.2,13.8 L13,17.6" stroke="#a6e3a1" stroke-width="2.8" stroke-linecap="round"/></svg>
<div class="t" style="left:1120px;top:67px">(/) Type something</div>
<svg class="i" style="left:1110px;top:88px" width="22" height="22" viewBox="0 0 22 22"><path d="M1.6,5 H5.6 Q6.4,5 6.9,5.7 L7.8,7.2 H13.4 Q15,7.2 15,8.8 V16.2 Q15,17.8 13.4,17.8 H1.6 Q0,17.8 0,16.2 V6.6 Q0,5 1.6,5 Z" fill="#d3d8f6"/></svg>
<div class="t" style="left:1130px;top:89px">.cache</div>
<svg class="i" style="left:1110px;top:110px" width="22" height="22" viewBox="0 0 22 22"><path d="M1.5,5.4 H5.2 Q6,5.4 6.5,6.1 L7.3,7.4 H12.6 Q14,7.4 14,8.8 V17.3 H0 V6.9 Q0,5.4 1.5,5.4 Z" fill="#f05033"/><path d="M6.6,8.6 L10.4,12.4 L6.6,16.2 L2.8,12.4 Z" fill="#3b1410"/><path d="M6.6,10.6 V14.2 M6.6,11.4 L8.2,12.6" stroke="#f05033" stroke-width="0.9" fill="none"/></svg>
<div class="t sel" style="left:1130px;top:111px">.git</div>
<svg class="i" style="left:1110px;top:132px" width="22" height="22" viewBox="0 0 22 22"><path d="M1.5,5.4 H5.2 Q6,5.4 6.5,6.1 L7.3,7.4 H12.6 Q14,7.4 14,8.8 V17.3 H0 V6.9 Q0,5.4 1.5,5.4 Z" fill="#030305"/><path d="M3.6,10.2 L5,11 H8.6 L10,10.2 V13.6 Q10,15.6 6.8,15.6 Q3.6,15.6 3.6,13.6 Z" fill="#34343e"/><rect x="4.6" y="12.4" width="4.4" height="2.2" rx="1.1" fill="#0a0a0e"/></svg>
<div class="t sel" style="left:1130px;top:133px">.github</div>
<svg class="i" style="left:1110px;top:154px" width="22" height="22" viewBox="0 0 22 22"><path d="M1.6,5 H5.6 Q6.4,5 6.9,5.7 L7.8,7.2 H13.4 Q15,7.2 15,8.8 V16.2 Q15,17.8 13.4,17.8 H1.6 Q0,17.8 0,16.2 V6.6 Q0,5 1.6,5 Z" fill="#d3d8f6"/></svg>
<div class="t sel" style="left:1130px;top:155px">alias</div>
<svg class="i" style="left:1110px;top:176px" width="22" height="22" viewBox="0 0 22 22"><path d="M1.6,5 H5.6 Q6.4,5 6.9,5.7 L7.8,7.2 H13.4 Q15,7.2 15,8.8 V16.2 Q15,17.8 13.4,17.8 H1.6 Q0,17.8 0,16.2 V6.6 Q0,5 1.6,5 Z" fill="#d3d8f6"/></svg>
<div class="t sel" style="left:1130px;top:177px">test</div>
<svg class="i" style="left:1110px;top:198px" width="22" height="22" viewBox="0 0 22 22"><path d="M1.6,5 H5.6 Q6.4,5 6.9,5.7 L7.8,7.2 H13.4 Q15,7.2 15,8.8 V16.2 Q15,17.8 13.4,17.8 H1.6 Q0,17.8 0,16.2 V6.6 Q0,5 1.6,5 Z" fill="#d3d8f6"/></svg>
<div class="t sel" style="left:1130px;top:199px">versions</div>
<svg class="i" style="left:1110px;top:220px" width="22" height="22" viewBox="0 0 22 22"><path d="M-0.2,10.4 Q-0.2,8.2 1.6,8.2 H8.6 Q9.8,8.2 10,9.6 L10.3,8.1 L13.3,10.6 L10.6,12.4 Q9.6,16.2 5,16.2 Q-0.2,16.2 -0.2,10.4 Z" fill="#1698ee"/><rect x="5.8" y="5.8" width="2.4" height="3" fill="#2f8fe6"/></svg>
<div class="t sel" style="left:1130px;top:221px">.dockerignore</div>
<svg class="i" style="left:1110px;top:242px" width="22" height="22" viewBox="0 0 22 22"><g transform="translate(7,11.4)"><rect x="-1.7" y="-7.4" width="3.4" height="4" rx="0.6" transform="rotate(0)" fill="#8d8f9d"/><rect x="-1.7" y="-7.4" width="3.4" height="4" rx="0.6" transform="rotate(45)" fill="#8d8f9d"/><rect x="-1.7" y="-7.4" width="3.4" height="4" rx="0.6" transform="rotate(90)" fill="#8d8f9d"/><rect x="-1.7" y="-7.4" width="3.4" height="4" rx="0.6" transform="rotate(135)" fill="#8d8f9d"/><rect x="-1.7" y="-7.4" width="3.4" height="4" rx="0.6" transform="rotate(180)" fill="#8d8f9d"/><rect x="-1.7" y="-7.4" width="3.4" height="4" rx="0.6" transform="rotate(225)" fill="#8d8f9d"/><rect x="-1.7" y="-7.4" width="3.4" height="4" rx="0.6" transform="rotate(270)" fill="#8d8f9d"/><rect x="-1.7" y="-7.4" width="3.4" height="4" rx="0.6" transform="rotate(315)" fill="#8d8f9d"/><circle r="5.5" fill="#8d8f9d"/><circle r="2.4" fill="#1e1e2e"/></g></svg>
<div class="t sel" style="left:1130px;top:243px">.editorconfig</div>
<svg class="i" style="left:1110px;top:264px" width="22" height="22" viewBox="0 0 22 22"><path d="M5.9,5.2 Q6.5,4.9 7.1,5.5 L12,10.4 Q12.6,11.2 12,12 L7.1,16.9 Q6.5,17.5 5.9,16.9 L0.1,11.8 Q-0.4,11.2 0.1,10.6 Z" fill="#e8803a"/><path d="M6.4,8 V14.8 M6.4,9.6 L8.6,11.8" stroke="#5a2a12" stroke-width="1.1" fill="none"/><circle cx="6.4" cy="8.2" r="1" fill="#5a2a12"/><circle cx="6.4" cy="14.6" r="1" fill="#5a2a12"/><circle cx="8.7" cy="11.9" r="1" fill="#5a2a12"/></svg>
<div class="t sel" style="left:1130px;top:265px">.gitattributes</div>
<svg class="i" style="left:1110px;top:286px" width="22" height="22" viewBox="0 0 22 22"><path d="M5.9,5.2 Q6.5,4.9 7.1,5.5 L12,10.4 Q12.6,11.2 12,12 L7.1,16.9 Q6.5,17.5 5.9,16.9 L0.1,11.8 Q-0.4,11.2 0.1,10.6 Z" fill="#e8803a"/><path d="M6.4,8 V14.8 M6.4,9.6 L8.6,11.8" stroke="#5a2a12" stroke-width="1.1" fill="none"/><circle cx="6.4" cy="8.2" r="1" fill="#5a2a12"/><circle cx="6.4" cy="14.6" r="1" fill="#5a2a12"/><circle cx="8.7" cy="11.9" r="1" fill="#5a2a12"/></svg>
<div class="t sel" style="left:1130px;top:287px">.gitignore</div>
<svg class="i" style="left:1110px;top:308px" width="22" height="22" viewBox="0 0 22 22"><path d="M1.4,3.6 H8.6 L14,9 V18.3 Q14,19.7 12.6,19.7 H1.4 Q0,19.7 0,18.3 V5 Q0,3.6 1.4,3.6 Z" fill="#f3c789"/><path d="M9.2,3.6 V8.6 H14" fill="none" stroke="#1e1e2e" stroke-width="1.1"/></svg>
<div class="t sel" style="left:1130px;top:309px">.mailmap</div>
<svg class="i" style="left:1110px;top:330px" width="22" height="22" viewBox="0 0 22 22"><path d="M1.4,3.6 H8.6 L14,9 V18.3 Q14,19.7 12.6,19.7 H1.4 Q0,19.7 0,18.3 V5 Q0,3.6 1.4,3.6 Z" fill="#f3c789"/><path d="M9.2,3.6 V8.6 H14" fill="none" stroke="#1e1e2e" stroke-width="1.1"/></svg>
<div class="t sel" style="left:1130px;top:331px">.npmrc</div>
<svg class="i" style="left:1110px;top:352px" width="22" height="22" viewBox="0 0 22 22"><rect x="0.4" y="4.2" width="5" height="2" fill="#f7d046"/><rect x="1.6" y="7.3" width="6" height="2.1" fill="#f2a93b"/><rect x="3" y="10.4" width="5" height="2.1" fill="#f5b53c"/><rect x="9" y="10.4" width="4.4" height="2.1" fill="#f5b53c"/><rect x="3" y="13.5" width="5" height="2.1" fill="#f0a030"/><rect x="9" y="13.5" width="5" height="2.1" fill="#f0a030"/><rect x="1.4" y="16.6" width="6" height="2.1" fill="#eb9a2a"/></svg>
<div class="t sel" style="left:1130px;top:353px">.travis.yml</div>
<svg class="i" style="left:1110px;top:374px" width="22" height="22" viewBox="0 0 22 22"><rect x="0" y="6" width="16" height="10.2" rx="1.4" fill="#969aa8"/><path d="M2.7,13.6 V8.6 L5,11.2 L7.3,8.6 V13.6" stroke="#1e1e2e" stroke-width="1.5" fill="none" stroke-linejoin="miter"/><path d="M11.7,8.4 V12" stroke="#1e1e2e" stroke-width="1.5"/><path d="M9.4,11 H14 L11.7,13.9 Z" fill="#1e1e2e"/></svg>
<div class="t sel" style="left:1130px;top:375px">CODE_OF_CONDUCT.md</div>
<svg class="i" style="left:1090px;top:396px" width="22" height="22" viewBox="0 0 22 22"><path d="M1,5 L7.5,11.4 L1,17.8" fill="none" stroke="#f5e0dc" stroke-width="3.1" stroke-linejoin="miter"/></svg>
<svg class="i" style="left:1110px;top:396px" width="22" height="22" viewBox="0 0 22 22"><rect x="0" y="6" width="16" height="10.2" rx="1.4" fill="#969aa8"/><path d="M2.7,13.6 V8.6 L5,11.2 L7.3,8.6 V13.6" stroke="#1e1e2e" stroke-width="1.5" fill="none" stroke-linejoin="miter"/><path d="M11.7,8.4 V12" stroke="#1e1e2e" stroke-width="1.5"/><path d="M9.4,11 H14 L11.7,13.9 Z" fill="#1e1e2e"/></svg>
<div class="t sel" style="left:1130px;top:397px">CONTRIBUTING.md</div>
<svg class="i" style="left:1110px;top:418px" width="22" height="22" viewBox="0 0 22 22"><path d="M-0.2,10.4 Q-0.2,8.2 1.6,8.2 H8.6 Q9.8,8.2 10,9.6 L10.3,8.1 L13.3,10.6 L10.6,12.4 Q9.6,16.2 5,16.2 Q-0.2,16.2 -0.2,10.4 Z" fill="#1698ee"/><rect x="5.8" y="5.8" width="2.4" height="3" fill="#2f8fe6"/></svg>
<div class="t" style="left:1130px;top:419px">Dockerfile</div>
<svg class="i" style="left:1110px;top:440px" width="22" height="22" viewBox="0 0 22 22"><rect x="0" y="6" width="16" height="10.2" rx="1.4" fill="#969aa8"/><path d="M2.7,13.6 V8.6 L5,11.2 L7.3,8.6 V13.6" stroke="#1e1e2e" stroke-width="1.5" fill="none" stroke-linejoin="miter"/><path d="M11.7,8.4 V12" stroke="#1e1e2e" stroke-width="1.5"/><path d="M9.4,11 H14 L11.7,13.9 Z" fill="#1e1e2e"/></svg>
<div class="t" style="left:1130px;top:441px">GOVERNANCE.md</div>
<svg class="i" style="left:1110px;top:462px" width="22" height="22" viewBox="0 0 22 22"><rect x="0" y="6" width="16" height="10.2" rx="1.4" fill="#969aa8"/><path d="M2.7,13.6 V8.6 L5,11.2 L7.3,8.6 V13.6" stroke="#1e1e2e" stroke-width="1.5" fill="none" stroke-linejoin="miter"/><path d="M11.7,8.4 V12" stroke="#1e1e2e" stroke-width="1.5"/><path d="M9.4,11 H14 L11.7,13.9 Z" fill="#1e1e2e"/></svg>
<div class="t" style="left:1130px;top:463px">LICENSE.md</div>
<svg class="i" style="left:1110px;top:484px" width="22" height="22" viewBox="0 0 22 22"><path d="M3.1,7.4 L13.2,17" stroke="#41a0e6" stroke-width="3.8" stroke-linecap="round"/><circle cx="3.3" cy="7.5" r="3.4" fill="#41a0e6"/><path d="M-0.4,3.4 L3.6,7.2 L0.6,8.4 Z" fill="#1e1e2e"/><circle cx="2.3" cy="6.2" r="1.5" fill="#1e1e2e"/><path d="M14.4,4.5 L7,12.2" stroke="#41a0e6" stroke-width="1.9" stroke-linecap="round"/><path d="M6.6,12.5 L2,16.9" stroke="#41a0e6" stroke-width="3.8" stroke-linecap="round"/></svg>
<div class="t" style="left:1130px;top:485px">Makefile</div>
<svg class="i" style="left:1110px;top:506px" width="22" height="22" viewBox="0 0 22 22"><rect x="0" y="6" width="16" height="10.2" rx="1.4" fill="#969aa8"/><path d="M2.7,13.6 V8.6 L5,11.2 L7.3,8.6 V13.6" stroke="#1e1e2e" stroke-width="1.5" fill="none" stroke-linejoin="miter"/><path d="M11.7,8.4 V12" stroke="#1e1e2e" stroke-width="1.5"/><path d="M9.4,11 H14 L11.7,13.9 Z" fill="#1e1e2e"/></svg>
<div class="t" style="left:1130px;top:507px">PROJECT_CHARTER.md</div>
<svg class="i" style="left:1110px;top:528px" width="22" height="22" viewBox="0 0 22 22"><rect x="0" y="6" width="16" height="10.2" rx="1.4" fill="#969aa8"/><path d="M2.7,13.6 V8.6 L5,11.2 L7.3,8.6 V13.6" stroke="#1e1e2e" stroke-width="1.5" fill="none" stroke-linejoin="miter"/><path d="M11.7,8.4 V12" stroke="#1e1e2e" stroke-width="1.5"/><path d="M9.4,11 H14 L11.7,13.9 Z" fill="#1e1e2e"/></svg>
<div class="t" style="left:1130px;top:529px">README.md</div>
<svg class="i" style="left:1110px;top:550px" width="22" height="22" viewBox="0 0 22 22"><rect x="0" y="6" width="16" height="10.2" rx="1.4" fill="#969aa8"/><path d="M2.7,13.6 V8.6 L5,11.2 L7.3,8.6 V13.6" stroke="#1e1e2e" stroke-width="1.5" fill="none" stroke-linejoin="miter"/><path d="M11.7,8.4 V12" stroke="#1e1e2e" stroke-width="1.5"/><path d="M9.4,11 H14 L11.7,13.9 Z" fill="#1e1e2e"/></svg>
<div class="t" style="left:1130px;top:551px">ROADMAP.md</div>
<svg class="i" style="left:1110px;top:572px" width="22" height="22" viewBox="0 0 22 22"><path d="M1.4,3.6 H8.6 L14,9 V18.3 Q14,19.7 12.6,19.7 H1.4 Q0,19.7 0,18.3 V5 Q0,3.6 1.4,3.6 Z" fill="#f3c789"/><path d="M9.2,3.6 V8.6 H14" fill="none" stroke="#1e1e2e" stroke-width="1.1"/></svg>
<div class="t" style="left:1130px;top:573px">bash_completion</div>
<svg class="i" style="left:1110px;top:594px" width="22" height="22" viewBox="0 0 22 22"><rect x="0.9" y="5" width="14.3" height="12.8" rx="1.6" fill="none" stroke="#2fca74" stroke-width="1.9"/><path d="M3.6,8.3 L6.8,11 L3.6,13.7" fill="none" stroke="#2fca74" stroke-width="1.7"/><path d="M7.6,14.2 H12" stroke="#2fca74" stroke-width="1.7"/></svg>
<div class="t" style="left:1130px;top:595px">install.sh</div>
<svg class="i" style="left:1110px;top:616px" width="22" height="22" viewBox="0 0 22 22"><path d="M1.4,3.6 H8.6 L14,9 V18.3 Q14,19.7 12.6,19.7 H1.4 Q0,19.7 0,18.3 V5 Q0,3.6 1.4,3.6 Z" fill="#f3c789"/><path d="M9.2,3.6 V8.6 H14" fill="none" stroke="#1e1e2e" stroke-width="1.1"/></svg>
<div class="t" style="left:1130px;top:617px">nvm-exec</div>
<svg class="i" style="left:1110px;top:638px" width="22" height="22" viewBox="0 0 22 22"><rect x="0.9" y="5" width="14.3" height="12.8" rx="1.6" fill="none" stroke="#2fca74" stroke-width="1.9"/><path d="M3.6,8.3 L6.8,11 L3.6,13.7" fill="none" stroke="#2fca74" stroke-width="1.7"/><path d="M7.6,14.2 H12" stroke="#2fca74" stroke-width="1.7"/></svg>
<div class="t" style="left:1130px;top:639px">nvm.sh</div>
<svg class="i" style="left:1110px;top:660px" width="22" height="22" viewBox="0 0 22 22"><path d="M6.05,5.5 L11.25,8.5 V14.5 L6.05,17.5 L0.85,14.5 V8.5 Z" fill="none" stroke="#a85ad2" stroke-width="1.7" stroke-linejoin="round"/><path d="M0.9,8.6 L6.05,11.5 L11.2,8.6 M6.05,11.5 V17.4 M3.4,7 L8.7,10" fill="none" stroke="#a85ad2" stroke-width="1.4"/></svg>
<div class="t" style="left:1130px;top:661px">package.json</div>
<svg class="i" style="left:1110px;top:682px" width="22" height="22" viewBox="0 0 22 22"><rect x="0.9" y="5" width="14.3" height="12.8" rx="1.6" fill="none" stroke="#2fca74" stroke-width="1.9"/><path d="M3.6,8.3 L6.8,11 L3.6,13.7" fill="none" stroke="#2fca74" stroke-width="1.7"/><path d="M7.6,14.2 H12" stroke="#2fca74" stroke-width="1.7"/></svg>
<div class="t" style="left:1130px;top:683px">rename_test.sh</div>
<svg class="i" style="left:1110px;top:704px" width="22" height="22" viewBox="0 0 22 22"><rect x="0.9" y="5" width="14.3" height="12.8" rx="1.6" fill="none" stroke="#2fca74" stroke-width="1.9"/><path d="M3.6,8.3 L6.8,11 L3.6,13.7" fill="none" stroke="#2fca74" stroke-width="1.7"/><path d="M7.6,14.2 H12" stroke="#2fca74" stroke-width="1.7"/></svg>
<div class="t" style="left:1130px;top:705px">update_test_mocks.sh</div>
<svg class="i" style="left:1330px;top:792px" width="22" height="22" viewBox="0 0 22 22"><path d="M4.2,5.6 Q4.2,4.6 5.3,4.6 Q6.4,4.6 6.4,5.6 V10 L10.6,10.8 Q11.8,11.2 11.8,12.4 V15 Q11.8,17.2 10,17.2 H5.8 Q4.6,17.2 3.8,16.2 L0.8,12.4 Q0.4,11.6 1.2,11.2 Q2,10.9 2.8,11.6 L4.2,12.8 Z" fill="#6c7086"/></svg>
<div class="t" style="left:1350px;top:793px"><span style="color:#6c7086">Select</span></div>
<div class="t" style="left:1440px;top:793px"><span style="color:#6c7086">15/29</span></div>
<div class="t" style="left:1510px;top:1px"><span style="color:#94e2d5">package</span><span style="color:#cdd6f4"> internal</span></div>
<div class="t" style="left:1510px;top:45px"><span style="color:#94e2d5">import</span><span style="color:#cdd6f4"> (</span></div>
<div class="t" style="left:1510px;top:67px"><span style="color:#a6e3a1">    "os"</span></div>
<div class="t" style="left:1510px;top:89px"><span style="color:#a6e3a1">    "path/filepath"</span></div>
<div class="t" style="left:1510px;top:111px"><span style="color:#a6e3a1">    "strings"</span></div>
<div class="t" style="left:1510px;top:133px"><span style="color:#cdd6f4">)</span></div>
<div class="t" style="left:1510px;top:177px"><span style="color:#6c7086">// Cancel typing modal e.g. create file o</span></div>
<div class="t" style="left:1510px;top:199px"><span style="color:#f38ba8">func</span><span style="color:#cdd6f4"> </span><span style="color:#89b4fa">cancelTypingModal</span><span style="color:#cdd6f4">(m model) model {</span></div>
<div class="t" style="left:1510px;top:221px"><span style="color:#cdd6f4">    m.typingModal.textInput.</span><span style="color:#89b4fa">Blur</span><span style="color:#cdd6f4">()</span></div>
<div class="t" style="left:1510px;top:243px"><span style="color:#cdd6f4">    m.typingModal.open = </span><span style="color:#fab387">false</span></div>
<div class="t" style="left:1510px;top:265px"><span style="color:#cdd6f4">    </span><span style="color:#cba6f7">return</span><span style="color:#cdd6f4"> m</span></div>
<div class="t" style="left:1510px;top:287px"><span style="color:#cdd6f4">}</span></div>
<div class="t" style="left:1510px;top:331px"><span style="color:#6c7086">// Close warn modal</span></div>
<div class="t" style="left:1510px;top:353px"><span style="color:#f38ba8">func</span><span style="color:#cdd6f4"> </span><span style="color:#89b4fa">cancelWarnModal</span><span style="color:#cdd6f4">(m model) model {</span></div>
<div class="t" style="left:1510px;top:375px"><span style="color:#cdd6f4">    m.warnModal.open = </span><span style="color:#fab387">false</span></div>
<div class="t" style="left:1510px;top:397px"><span style="color:#cdd6f4">    </span><span style="color:#cba6f7">return</span><span style="color:#cdd6f4"> m</span></div>
<div class="t" style="left:1510px;top:419px"><span style="color:#cdd6f4">}</span></div>
<div class="t" style="left:1510px;top:463px"><span style="color:#6c7086">// Confirm to create file or directory</span></div>
<div class="t" style="left:1510px;top:485px"><span style="color:#f38ba8">func</span><span style="color:#cdd6f4"> </span><span style="color:#89b4fa">createItem</span><span style="color:#cdd6f4">(m model) model {</span></div>
<div class="t" style="left:1510px;top:507px"><span style="color:#cdd6f4">    </span><span style="color:#cba6f7">if</span><span style="color:#cdd6f4"> !strings.</span><span style="color:#89b4fa">HasSuffix</span><span style="color:#cdd6f4">(m.typingModal.t</span></div>
<div class="t" style="left:1510px;top:529px"><span style="color:#cdd6f4">        path </span><span style="color:#89dceb">:=</span><span style="color:#cdd6f4"> filepath.</span><span style="color:#89b4fa">Join</span><span style="color:#cdd6f4">(m.typingMod</span></div>
<div class="t" style="left:1510px;top:551px"><span style="color:#cdd6f4">        path, _ = </span><span style="color:#89b4fa">renameIfDuplicate</span><span style="color:#cdd6f4">(path)</span></div>
<div class="t" style="left:1510px;top:573px"><span style="color:#cdd6f4">        </span><span style="color:#cba6f7">if</span><span style="color:#cdd6f4"> err </span><span style="color:#89dceb">:=</span><span style="color:#cdd6f4"> os.</span><span style="color:#89b4fa">MkdirAll</span><span style="color:#cdd6f4">(filepath.</span><span style="color:#89b4fa">Di</span></div>
<div class="t" style="left:1510px;top:595px"><span style="color:#cdd6f4">            </span><span style="color:#89b4fa">outPutLog</span><span style="color:#cdd6f4">(</span><span style="color:#a6e3a1">"Create item functi</span></div>
<div class="t" style="left:1510px;top:617px"><span style="color:#cdd6f4">        }</span></div>
<div class="t" style="left:1510px;top:639px"><span style="color:#cdd6f4">        f, err </span><span style="color:#89dceb">:=</span><span style="color:#cdd6f4"> os.</span><span style="color:#89b4fa">Create</span><span style="color:#cdd6f4">(path)</span></div>
<div class="t" style="left:1510px;top:661px"><span style="color:#cdd6f4">        </span><span style="color:#cba6f7">if</span><span style="color:#cdd6f4"> err </span><span style="color:#89dceb">!=</span><span style="color:#cdd6f4"> </span><span style="color:#fab387">nil</span><span style="color:#cdd6f4"> {</span></div>
<div class="t" style="left:1510px;top:683px"><span style="color:#cdd6f4">            </span><span style="color:#89b4fa">outPutLog</span><span style="color:#cdd6f4">(</span><span style="color:#a6e3a1">"Create item functi</span></div>
<div class="t" style="left:1510px;top:705px"><span style="color:#cdd6f4">        }</span></div>
<div class="t" style="left:1510px;top:727px"><span style="color:#cdd6f4">        </span><span style="color:#cba6f7">defer</span><span style="color:#cdd6f4"> f.</span><span style="color:#89b4fa">Close</span><span style="color:#cdd6f4">()</span></div>
<div class="t" style="left:1510px;top:749px"><span style="color:#cdd6f4">    } </span><span style="color:#cba6f7">else</span><span style="color:#cdd6f4"> {</span></div>
<div class="t" style="left:1510px;top:771px"><span style="color:#cdd6f4">        path </span><span style="color:#89dceb">:=</span><span style="color:#cdd6f4"> m.typingModal.location </span><span style="color:#89dceb">+</span></div>
<div class="t" style="left:1510px;top:793px"><span style="color:#cdd6f4">        err </span><span style="color:#89dceb">:=</span><span style="color:#cdd6f4"> os.</span><span style="color:#89b4fa">MkdirAll</span><span style="color:#cdd6f4">(path, </span><span style="color:#fab387">0755</span><span style="color:#cdd6f4">)</span></div>
<div class="t" style="left:40px;top:815px"><span style="color:#6c7086">Processes</span></div>
<div class="t" style="left:580px;top:1035px"><span style="color:#6c7086">1/4</span></div>
<div style="position:absolute;left:14px;top:835px;width:3px;height:44px;background:#f5e0dc"></div>
<svg class="i" style="left:30px;top:836px" width="22" height="22" viewBox="0 0 22 22"><path d="M9.4,6.2 V5.6 Q9.4,4.8 8.6,4.8 H1.6 Q0.8,4.8 0.8,5.6 V14.6 Q0.8,15.4 1.6,15.4 H2.4" fill="none" stroke="#afb5d0" stroke-width="1.4"/><rect x="4" y="7.6" width="8.6" height="10.6" rx="1" fill="none" stroke="#afb5d0" stroke-width="1.5"/></svg>
<div class="t" style="left:50px;top:837px">Game.of.Thrones.S02E02.mkv</div>
<svg class="i" style="left:320px;top:836px" width="22" height="22" viewBox="0 0 22 22"><circle cx="7" cy="11.3" r="7" fill="#74c7ec"/><path d="M6.8,7.4 V11.6 L9.4,13.2" fill="none" stroke="#1e1e2e" stroke-width="1.3"/></svg>
<div class="bar" style="left:30px;top:857px;width:90px"></div>
<div class="dots" style="left:120px;top:857px;width:450px"></div>
<div class="t" style="left:590px;top:859px">18%</div>
<svg class="i" style="left:30px;top:902px" width="22" height="22" viewBox="0 0 22 22"><circle cx="2.4" cy="7.4" r="1.9" fill="none" stroke="#afb5d0" stroke-width="1.3"/><circle cx="2.4" cy="15.6" r="1.9" fill="none" stroke="#afb5d0" stroke-width="1.3"/><path d="M3.8,8.6 L12.8,17 M3.8,14.4 L12.8,6" stroke="#afb5d0" stroke-width="1.7"/></svg>
<div class="t" style="left:50px;top:903px">Screenshots(1)</div>
<svg class="i" style="left:200px;top:902px" width="22" height="22" viewBox="0 0 22 22"><circle cx="8" cy="11" r="8.1" fill="#a6e3a1"/><path d="M4.4,11.2 L7,13.6 L11.6,8.6" fill="none" stroke="#1e1e2e" stroke-width="1.6"/></svg>
<div class="bar" style="left:30px;top:923px;width:540px"></div>
<div class="t" style="left:580px;top:925px">100%</div>
<svg class="i" style="left:30px;top:968px" width="22" height="22" viewBox="0 0 22 22"><path d="M9.4,6.2 V5.6 Q9.4,4.8 8.6,4.8 H1.6 Q0.8,4.8 0.8,5.6 V14.6 Q0.8,15.4 1.6,15.4 H2.4" fill="none" stroke="#afb5d0" stroke-width="1.4"/><rect x="4" y="7.6" width="8.6" height="10.6" rx="1" fill="none" stroke="#afb5d0" stroke-width="1.5"/></svg>
<div class="t" style="left:50px;top:969px">Screenshot from 2024-05-26 16-08-17.png</div>
<svg class="i" style="left:450px;top:968px" width="22" height="22" viewBox="0 0 22 22"><circle cx="8" cy="11" r="8.1" fill="#a6e3a1"/><path d="M4.4,11.2 L7,13.6 L11.6,8.6" fill="none" stroke="#1e1e2e" stroke-width="1.6"/></svg>
<div class="bar" style="left:30px;top:989px;width:540px"></div>
<div class="t" style="left:580px;top:991px">100%</div>
<div class="t" style="left:680px;top:815px"><span style="color:#6c7086">Metadata</span></div>
<div class="t" style="left:1220px;top:1035px"><span style="color:#6c7086">1/3</span></div>
<div class="t" style="left:650px;top:837px">FileName</div>
<div class="t" style="left:810px;top:837px">handle_modal.go</div>
<div class="t" style="left:650px;top:859px">FileSize</div>
<div class="t" style="left:810px;top:859px">3.41 KB</div>
<div class="t" style="left:650px;top:881px">FileModifyDate</div>
<div class="t" style="left:810px;top:881px">2024-05-12 01:27:12.812637651 +0800 CST</div>
<div class="t" style="left:1320px;top:815px"><span style="color:#6c7086">Clipboard</span></div>
<svg class="i" style="left:1290px;top:836px" width="22" height="22" viewBox="0 0 22 22"><path d="M1.6,5 H5.6 Q6.4,5 6.9,5.7 L7.8,7.2 H13.4 Q15,7.2 15,8.8 V16.2 Q15,17.8 13.4,17.8 H1.6 Q0,17.8 0,16.2 V6.6 Q0,5 1.6,5 Z" fill="#d3d8f6"/></svg>
<div class="t" style="left:1310px;top:837px">/home/nightcat/.nvm/.git</div>
<svg class="i" style="left:1290px;top:858px" width="22" height="22" viewBox="0 0 22 22"><path d="M1.6,5 H5.6 Q6.4,5 6.9,5.7 L7.8,7.2 H13.4 Q15,7.2 15,8.8 V16.2 Q15,17.8 13.4,17.8 H1.6 Q0,17.8 0,16.2 V6.6 Q0,5 1.6,5 Z" fill="#d3d8f6"/></svg>
<div class="t" style="left:1310px;top:859px">/home/nightcat/.nvm/.github</div>
<svg class="i" style="left:1290px;top:880px" width="22" height="22" viewBox="0 0 22 22"><path d="M1.6,5 H5.6 Q6.4,5 6.9,5.7 L7.8,7.2 H13.4 Q15,7.2 15,8.8 V16.2 Q15,17.8 13.4,17.8 H1.6 Q0,17.8 0,16.2 V6.6 Q0,5 1.6,5 Z" fill="#d3d8f6"/></svg>
<div class="t" style="left:1310px;top:881px">/home/nightcat/.nvm/alias</div>
<svg class="i" style="left:1290px;top:902px" width="22" height="22" viewBox="0 0 22 22"><path d="M1.6,5 H5.6 Q6.4,5 6.9,5.7 L7.8,7.2 H13.4 Q15,7.2 15,8.8 V16.2 Q15,17.8 13.4,17.8 H1.6 Q0,17.8 0,16.2 V6.6 Q0,5 1.6,5 Z" fill="#d3d8f6"/></svg>
<div class="t" style="left:1310px;top:903px">/home/nightcat/.nvm/test</div>
<svg class="i" style="left:1290px;top:924px" width="22" height="22" viewBox="0 0 22 22"><path d="M1.6,5 H5.6 Q6.4,5 6.9,5.7 L7.8,7.2 H13.4 Q15,7.2 15,8.8 V16.2 Q15,17.8 13.4,17.8 H1.6 Q0,17.8 0,16.2 V6.6 Q0,5 1.6,5 Z" fill="#d3d8f6"/></svg>
<div class="t" style="left:1310px;top:925px">/home/nightcat/.nvm/versions</div>
<svg class="i" style="left:1290px;top:946px" width="22" height="22" viewBox="0 0 22 22"><path d="M-0.2,10.4 Q-0.2,8.2 1.6,8.2 H8.6 Q9.8,8.2 10,9.6 L10.3,8.1 L13.3,10.6 L10.6,12.4 Q9.6,16.2 5,16.2 Q-0.2,16.2 -0.2,10.4 Z" fill="#1698ee"/><rect x="5.8" y="5.8" width="2.4" height="3" fill="#2f8fe6"/></svg>
<div class="t" style="left:1310px;top:947px">/home/nightcat/.nvm/.dockerignore</div>
<svg class="i" style="left:1290px;top:968px" width="22" height="22" viewBox="0 0 22 22"><g transform="translate(7,11.4)"><rect x="-1.7" y="-7.4" width="3.4" height="4" rx="0.6" transform="rotate(0)" fill="#8d8f9d"/><rect x="-1.7" y="-7.4" width="3.4" height="4" rx="0.6" transform="rotate(45)" fill="#8d8f9d"/><rect x="-1.7" y="-7.4" width="3.4" height="4" rx="0.6" transform="rotate(90)" fill="#8d8f9d"/><rect x="-1.7" y="-7.4" width="3.4" height="4" rx="0.6" transform="rotate(135)" fill="#8d8f9d"/><rect x="-1.7" y="-7.4" width="3.4" height="4" rx="0.6" transform="rotate(180)" fill="#8d8f9d"/><rect x="-1.7" y="-7.4" width="3.4" height="4" rx="0.6" transform="rotate(225)" fill="#8d8f9d"/><rect x="-1.7" y="-7.4" width="3.4" height="4" rx="0.6" transform="rotate(270)" fill="#8d8f9d"/><rect x="-1.7" y="-7.4" width="3.4" height="4" rx="0.6" transform="rotate(315)" fill="#8d8f9d"/><circle r="5.5" fill="#8d8f9d"/><circle r="2.4" fill="#1e1e2e"/></g></svg>
<div class="t" style="left:1310px;top:969px">/home/nightcat/.nvm/.editorconfig</div>
<svg class="i" style="left:1290px;top:990px" width="22" height="22" viewBox="0 0 22 22"><path d="M5.9,5.2 Q6.5,4.9 7.1,5.5 L12,10.4 Q12.6,11.2 12,12 L7.1,16.9 Q6.5,17.5 5.9,16.9 L0.1,11.8 Q-0.4,11.2 0.1,10.6 Z" fill="#e8803a"/><path d="M6.4,8 V14.8 M6.4,9.6 L8.6,11.8" stroke="#5a2a12" stroke-width="1.1" fill="none"/><circle cx="6.4" cy="8.2" r="1" fill="#5a2a12"/><circle cx="6.4" cy="14.6" r="1" fill="#5a2a12"/><circle cx="8.7" cy="11.9" r="1" fill="#5a2a12"/></svg>
<div class="t" style="left:1310px;top:991px">/home/nightcat/.nvm/.gitattributes</div>
<div class="t" style="left:1290px;top:1013px">7 item left....</div>
</div>
</body></html>
